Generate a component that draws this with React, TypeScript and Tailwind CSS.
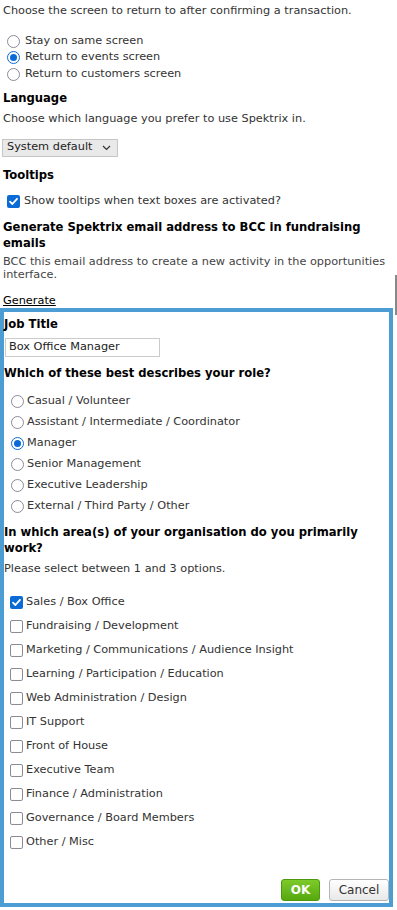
import React from "react";

const font = { fontFamily: '"DejaVu Sans", Verdana, sans-serif' };

function Radio({ checked }: { checked?: boolean }) {
  return (
    <span
      className={
        "inline-flex items-center justify-center w-[13px] h-[13px] rounded-full border-[1.5px] bg-white shrink-0 " +
        (checked ? "border-[#0b6bd6]" : "border-[#8b8b98]")
      }
    >
      {checked && <span className="w-[7px] h-[7px] rounded-full bg-[#0b6bd6]" />}
    </span>
  );
}

function Check({ checked }: { checked?: boolean }) {
  return checked ? (
    <span className="inline-flex items-center justify-center w-[13px] h-[13px] rounded-[2px] bg-[#0b6bd6] shrink-0">
      <svg width="11" height="11" viewBox="0 0 11 11">
        <path d="M2 5.6 L4.4 8 L9 2.8" fill="none" stroke="white" strokeWidth="1.8" strokeLinecap="round" strokeLinejoin="round" />
      </svg>
    </span>
  ) : (
    <span className="inline-block w-[13px] h-[13px] rounded-[2px] border-[1.5px] border-[#8b8b98] bg-white shrink-0" />
  );
}

const roles = [
  ["Casual / Volunteer", false],
  ["Assistant / Intermediate / Coordinator", false],
  ["Manager", true],
  ["Senior Management", false],
  ["Executive Leadership", false],
  ["External / Third Party / Other", false],
] as const;

const areas = [
  ["Sales / Box Office", true],
  ["Fundraising / Development", false],
  ["Marketing / Communications / Audience Insight", false],
  ["Learning / Participation / Education", false],
  ["Web Administration / Design", false],
  ["IT Support", false],
  ["Front of House", false],
  ["Executive Team", false],
  ["Finance / Administration", false],
  ["Governance / Board Members", false],
  ["Other / Misc", false],
] as const;

export default function App() {
  return (
    <div className="w-[397px] h-[910px] bg-white overflow-hidden relative text-[11.3px] text-[#333]" style={font}>
      <div className="pl-[3px] pr-[8px]">
        <div className="h-[22px] flex items-center">Choose the screen to return to after confirming a transaction.</div>
        <div className="mt-[11px] flex flex-col">
          {[
            ["Stay on same screen", false],
            ["Return to events screen", true],
            ["Return to customers screen", false],
          ].map(([l, c]) => (
            <label key={l as string} className="h-[16.5px] flex items-center gap-[5px] pl-[4px]">
              <Radio checked={c as boolean} />
              <span>{l}</span>
            </label>
          ))}
        </div>
        <div className="mt-[7px] h-[18px] flex items-center font-bold text-[11.6px] text-black">Language</div>
        <div className="mt-[2px] h-[20px] flex items-center">Choose which language you prefer to use Spektrix in.</div>
        <div className="mt-[9px] ml-[-1px] w-[116px] h-[18px] bg-[#e9e9e9] border border-[#c6c6c6] flex items-center justify-between pl-[4px] pr-[6px] text-[#222]">
          <span>System default</span>
          <svg width="9" height="6" viewBox="0 0 9 6">
            <path d="M1 1 L4.5 4.5 L8 1" fill="none" stroke="#333" strokeWidth="1.2" />
          </svg>
        </div>
        <div className="mt-[10px] h-[18px] flex items-center font-bold text-[11.6px] text-black">Tooltips</div>
        <label className="mt-[9px] h-[16px] flex items-center gap-[4px] pl-[4px]">
          <Check checked />
          <span>Show tooltips when text boxes are activated?</span>
        </label>
        <div className="mt-[9px] font-bold text-[11.6px] leading-[16px] text-black">
          Generate Spektrix email address to BCC in fundraising emails
        </div>
        <div className="mt-[4px] leading-[13px] text-[#444]">
          BCC this email address to create a new activity in the opportunities interface.
        </div>
        <div className="mt-[14px] h-[14px] flex items-center text-black underline">Generate</div>
      </div>
      <div className="absolute right-0 top-[275px] w-[2px] h-[40px] bg-[#888]" />
      <div className="mt-[-1px] w-[393px] h-[599px] border-4 border-[#4b9dd4] bg-white flex flex-col">
        <div className="mt-[4px] h-[18px] flex items-center font-bold text-[11.6px] text-black">Job Title</div>
        <div className="mt-[4px] ml-[1px] w-[155px] h-[19px] border border-[#cbcbcb] flex items-center pl-[3px] text-[#222]">
          Box Office Manager
        </div>
        <div className="mt-[8px] h-[18px] flex items-center font-bold text-[11.6px] text-black">
          Which of these best describes your role?
        </div>
        <div className="mt-[8px] flex flex-col">
          {roles.map(([l, c]) => (
            <label key={l} className="h-[21px] flex items-center gap-[3px] pl-[7px]">
              <Radio checked={c} />
              <span>{l}</span>
            </label>
          ))}
        </div>
        <div className="mt-[7px] font-bold text-[11.6px] leading-[16px] text-black">
          In which area(s) of your organisation do you primarily work?
        </div>
        <div className="mt-[6px] h-[16px] flex items-center">Please select between 1 and 3 options.</div>
        <div className="mt-[13px] flex flex-col">
          {areas.map(([l, c]) => (
            <label key={l} className="h-[24px] flex items-center gap-[3px] pl-[6px]">
              <Check checked={c} />
              <span>{l}</span>
            </label>
          ))}
        </div>
        <div className="mt-auto mb-[2px] flex justify-end gap-[9px]">
          <button className="w-[39px] h-[22px] rounded-[3px] border border-[#4c9a0c] bg-gradient-to-b from-[#7dcb2a] to-[#56a80e] text-white font-bold text-[12px]">
            OK
          </button>
          <button className="w-[60px] h-[22px] rounded-[3px] border border-[#b5b5b5] bg-gradient-to-b from-[#ffffff] to-[#e8e8e8] text-[#333] text-[12px]">
            Cancel
          </button>
        </div>
      </div>
    </div>
  );
}
